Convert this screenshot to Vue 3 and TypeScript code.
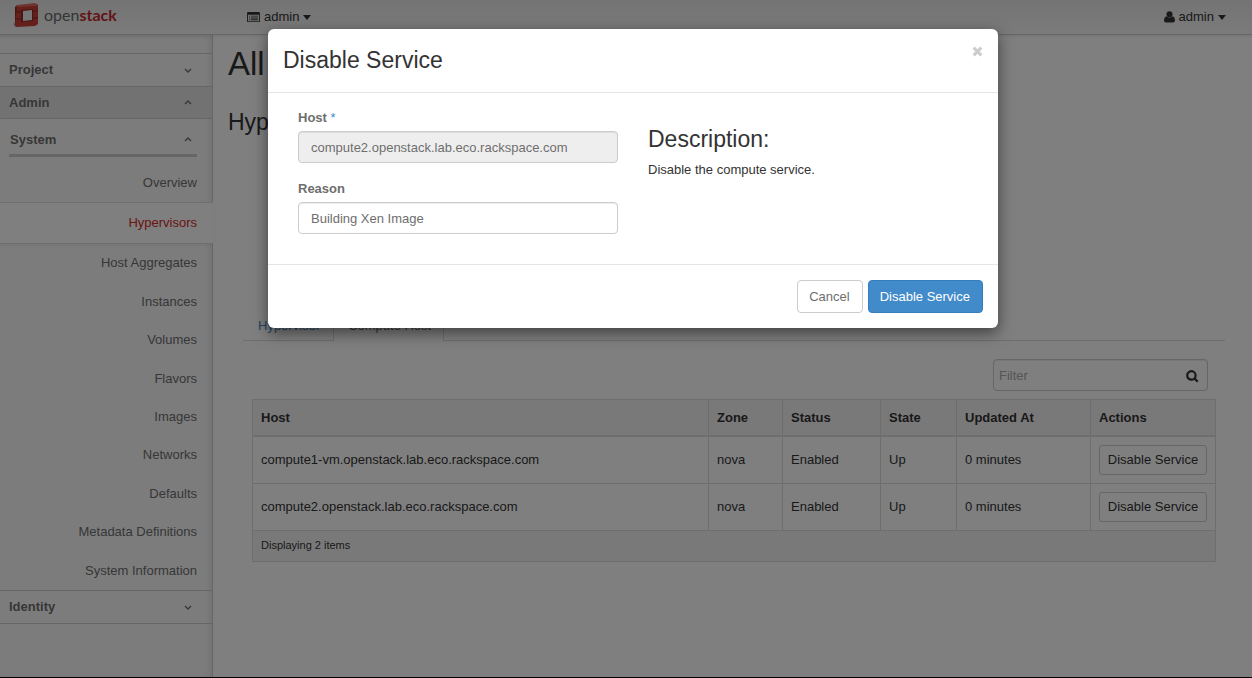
<script setup lang="ts">
import { ref } from 'vue'

interface HostRow {
  host: string
  zone: string
  status: string
  state: string
  updated: string
}

const systemLinks: string[] = [
  'Host Aggregates',
  'Instances',
  'Volumes',
  'Flavors',
  'Images',
  'Networks',
  'Defaults',
  'Metadata Definitions',
  'System Information',
]

const rows: HostRow[] = [
  { host: 'compute1-vm.openstack.lab.eco.rackspace.com', zone: 'nova', status: 'Enabled', state: 'Up', updated: '0 minutes' },
  { host: 'compute2.openstack.lab.eco.rackspace.com', zone: 'nova', status: 'Enabled', state: 'Up', updated: '0 minutes' },
]

const host = ref('compute2.openstack.lab.eco.rackspace.com')
const reason = ref('Building Xen Image')
const filter = ref('')
</script>

<template>
  <div class="page">
    <header class="topbar">
      <a class="brand" href="#">
        <svg class="cube" viewBox="0 0 26 25" aria-hidden="true">
          <path d="M0 21 L4 17 L4 24 L2 24 Z" fill="#b4b4b4" />
          <path d="M4 2 L2 4 L2 22 L4 24 Z" fill="#8e2a25" />
          <path d="M4 3 L23 1 L25 2 L25 21 L22 23 L4 24 L2 22 Z" fill="#cc4037" />
          <path d="M4 2 L22 0 L25 2 L23 3 L3 4 Z" fill="#dc6a62" />
          <path d="M8 7 L20 6 L20 18 L8 19 Z" fill="#8e2a25" />
          <path d="M10 8 L19 7 L19 17 L10 18 Z" fill="#ececec" />
          <path d="M3 9 L8 9 M3 16 L8 16 M20 8 L25 8 M20 15 L25 15" stroke="#8e2a25" stroke-width="1" />
        </svg>
        <span class="word">open<b>stack</b></span>
      </a>
      <button class="menu" type="button">
        <svg class="list-icon" viewBox="0 0 14 12" aria-hidden="true">
          <path fill="#333" fill-rule="evenodd" d="M1 0H13Q14 0 14 1V10Q14 11 13 11H1Q0 11 0 10V1Q0 0 1 0Z M1 3V10H13V3Z" />
          <path fill="#333" d="M2 4h1v1H2z M4 4h8v1H4z M2 6h1v1H2z M4 6h8v1H4z M2 8h1v1H2z M4 8h8v1H4z" />
        </svg>
        admin
        <i class="caret"></i>
      </button>
      <button class="menu user" type="button">
        <svg class="user-icon" viewBox="0 0 11 12" aria-hidden="true">
          <circle cx="5.5" cy="3.2" r="3" fill="#333" />
          <path fill="#333" d="M2.6 5.2Q5.5 8 8.4 5.2Q11 6 11 9.6Q11 11.4 9.2 11.4H1.8Q0 11.4 0 9.6Q0 6 2.6 5.2Z" />
        </svg>
        admin
        <i class="caret"></i>
      </button>
    </header>

    <div class="columns">
      <nav class="sidebar">
        <button class="section" type="button">
          Project
          <svg class="chevron" viewBox="0 0 8 5" aria-hidden="true"><path d="M1 1L4 4L7 1" /></svg>
        </button>
        <button class="section open" type="button">
          Admin
          <svg class="chevron" viewBox="0 0 8 5" aria-hidden="true"><path d="M1 4L4 1L7 4" /></svg>
        </button>
        <button class="group" type="button">
          System
          <svg class="chevron" viewBox="0 0 8 5" aria-hidden="true"><path d="M1 4L4 1L7 4" /></svg>
        </button>
        <a class="link" href="#">Overview</a>
        <a class="link current" href="#">Hypervisors</a>
        <ul class="links">
          <li v-for="name in systemLinks" :key="name"><a href="#">{{ name }}</a></li>
        </ul>
        <button class="section last" type="button">
          Identity
          <svg class="chevron" viewBox="0 0 8 5" aria-hidden="true"><path d="M1 1L4 4L7 1" /></svg>
        </button>
      </nav>

      <main class="main">
        <h1>All Hypervisors</h1>
        <h2>Hypervisor Summary</h2>
        <div class="panel">
          <ul class="tabs">
            <li><a href="#">Hypervisor</a></li>
            <li class="active"><a href="#">Compute Host</a></li>
          </ul>
          <div class="table-area">
            <div class="filter">
              <input v-model="filter" type="text" placeholder="Filter" aria-label="Filter" />
              <button type="button" aria-label="Search">
                <svg viewBox="0 0 13 13" aria-hidden="true">
                  <circle cx="5.4" cy="5.4" r="4.2" /><path d="M8.6 8.6L11.8 11.8" />
                </svg>
              </button>
            </div>
            <table>
              <colgroup>
                <col /><col class="c-zone" /><col class="c-status" /><col class="c-state" /><col class="c-updated" /><col class="c-actions" />
              </colgroup>
              <thead>
                <tr><th>Host</th><th>Zone</th><th>Status</th><th>State</th><th>Updated At</th><th>Actions</th></tr>
              </thead>
              <tbody>
                <tr v-for="row in rows" :key="row.host">
                  <td>{{ row.host }}</td>
                  <td>{{ row.zone }}</td>
                  <td>{{ row.status }}</td>
                  <td>{{ row.state }}</td>
                  <td>{{ row.updated }}</td>
                  <td><button class="row-action" type="button">Disable Service</button></td>
                </tr>
              </tbody>
              <tfoot>
                <tr><td colspan="6">Displaying 2 items</td></tr>
              </tfoot>
            </table>
          </div>
        </div>
      </main>
    </div>

    <div class="overlay">
      <form class="modal" role="dialog" aria-labelledby="modal-title" @submit.prevent>
        <div class="modal-head">
          <h3 id="modal-title">Disable Service</h3>
          <button class="close" type="button" aria-label="Close">
            <svg viewBox="0 0 10 10" aria-hidden="true"><path d="M1.5 1.5L8.5 8.5M8.5 1.5L1.5 8.5" /></svg>
          </button>
        </div>
        <div class="modal-body">
          <div class="col">
            <div class="field">
              <label for="host">Host <span class="required">*</span></label>
              <input id="host" v-model="host" type="text" readonly />
            </div>
            <div class="field">
              <label for="reason">Reason</label>
              <input id="reason" v-model="reason" type="text" />
            </div>
          </div>
          <div class="col description">
            <h3>Description:</h3>
            <p>Disable the compute service.</p>
          </div>
        </div>
        <div class="modal-foot">
          <button class="btn" type="button">Cancel</button>
          <button class="btn primary" type="submit">Disable Service</button>
        </div>
      </form>
    </div>
  </div>
</template>

<style>
body {
  margin: 0;
}
</style>

<style scoped>
* {
  box-sizing: border-box;
}

.page {
  position: relative;
  display: flex;
  flex-direction: column;
  min-height: 100vh;
  background: #fff;
  color: #333;
  font: 13px/18px "Liberation Sans", Arial, sans-serif;
}

button,
input {
  font: inherit;
}

button {
  cursor: pointer;
}

a {
  text-decoration: none;
}

h1,
h2,
h3,
p,
ul {
  margin: 0;
  padding: 0;
  font-weight: normal;
}

ul {
  list-style: none;
}

.topbar {
  z-index: 1;
  display: flex;
  align-items: center;
  height: 35px;
  padding-right: 26px;
  border-bottom: 1px solid #ccc;
  background: linear-gradient(#e8e8e8, #f6f6f6);
  box-shadow: 0 1px 4px rgba(0, 0, 0, 0.1);
}

.brand {
  display: flex;
  align-items: center;
  gap: 5px;
  width: 247px;
  height: 30px;
  margin-bottom: 4px;
  padding-left: 13px;
}

.cube {
  width: 26px;
  height: 25px;
}

.word {
  color: #6a6a6a;
  font: 16px/24px Lato, "Liberation Sans", sans-serif;
}

.word b {
  color: #c42a2c;
}

.menu {
  display: flex;
  align-items: center;
  gap: 4px;
  padding: 0;
  border: 0;
  background: none;
  color: #333;
}

.user {
  margin-left: auto;
}

.list-icon {
  width: 13px;
  height: 11px;
}

.user-icon {
  width: 11px;
  height: 12px;
}

.caret {
  border: 4px solid transparent;
  border-top: 5px solid #333;
  border-bottom: 0;
}

.columns {
  display: flex;
  flex: 1;
}

.sidebar {
  flex: none;
  width: 213px;
  padding-top: 18px;
  border-right: 1px solid #ccc;
  background: #f9f9f9;
  box-shadow: inset -3px 0 6px rgba(0, 0, 0, 0.08);
}

.section,
.group {
  display: flex;
  align-items: center;
  justify-content: space-between;
  width: 100%;
  border: 0;
  background: none;
  color: #6e6e6e;
  font-weight: bold;
}

.section {
  height: 33px;
  padding: 0 20px 0 9px;
  border-top: 1px solid #ccc;
}

.section.open {
  border-bottom: 1px solid #ccc;
  background: #e5e5e5;
}

.section.last {
  height: 34px;
  border-bottom: 1px solid #ccc;
}

.group {
  width: 188px;
  height: 38px;
  margin-left: 9px;
  padding: 6px 5px 0 1px;
  border-bottom: 3px solid #ccc;
}

.chevron {
  width: 8px;
  height: 5px;
  fill: none;
  stroke: #6e6e6e;
  stroke-width: 1.4;
}

.link,
.links a {
  color: #6e6e6e;
  text-align: right;
}

.link {
  display: block;
  padding: 17px 15px 10px;
}

.link.current {
  width: 213px;
  padding: 11px 16px;
  border-top: 1px solid #dcdcdc;
  border-bottom: 1px solid #dcdcdc;
  background: #fff;
  box-shadow: 0 2px 3px rgba(0, 0, 0, 0.05);
  color: #d42a27;
}

.links {
  display: flex;
  flex-direction: column;
  min-height: 346px;
  padding-right: 15px;
}

.links li {
  display: flex;
  flex: 1;
  align-items: center;
  justify-content: flex-end;
}

.main {
  flex: 1;
  min-width: 0;
  padding: 9px 27px 0 15px;
}

h1 {
  font-size: 33px;
  line-height: 40px;
}

h2,
h3 {
  font-size: 23px;
  line-height: 25px;
}

h2 {
  margin-top: 26px;
}

.panel {
  margin: 167px 0 0 15px;
}

.tabs {
  display: flex;
  border-bottom: 1px solid #ddd;
}

.tabs li {
  margin-bottom: -1px;
}

.tabs a {
  display: block;
  padding: 14px 12px 6px 14px;
  border: 1px solid transparent;
  border-bottom: 0;
  border-radius: 4px 4px 0 0;
  color: #428bca;
}

.tabs .active a {
  border-color: #ddd;
  background: #fff;
  color: #6e6e6e;
}

.table-area {
  padding: 18px 9px 0;
}

.filter {
  display: flex;
  width: 215px;
  height: 32px;
  margin: 0 8px 8px auto;
  border: 1px solid #ccc;
  border-radius: 4px;
  box-shadow: inset 0 1px 1px rgba(0, 0, 0, 0.075);
}

.filter input {
  flex: 1;
  min-width: 0;
  padding: 2px 5px 0;
  border: 0;
  background: none;
  color: #555;
}

.filter input::placeholder {
  color: #aaa;
  opacity: 1;
}

.filter button {
  display: flex;
  align-items: center;
  padding: 2px 8px 0;
  border: 0;
  background: none;
}

.filter svg {
  width: 13px;
  height: 13px;
  fill: none;
  stroke: #333;
  stroke-width: 2.2;
}

table {
  width: 100%;
  border: 1px solid #ddd;
  border-spacing: 0;
  table-layout: fixed;
}

.c-zone { width: 74px; }
.c-status { width: 98px; }
.c-state { width: 76px; }
.c-updated { width: 134px; }
.c-actions { width: 125px; }

th,
td {
  padding: 8px;
  border-left: 1px solid #ddd;
  text-align: left;
}

th:first-child,
td:first-child {
  border-left: 0;
}

th {
  height: 37px;
  border-bottom: 2px solid #ddd;
  background: #f3f3f3;
}

td {
  height: 47px;
  border-bottom: 1px solid #ddd;
}

tfoot td {
  height: 30px;
  padding: 0 8px 2px;
  border-bottom: 0;
  background: #f3f3f3;
  font-size: 11px;
}

.row-action {
  display: block;
  width: 108px;
  height: 30px;
  padding: 0;
  border: 1px solid #ccc;
  border-radius: 3px;
  background: #fff;
  color: #333;
}

.overlay {
  position: absolute;
  z-index: 2;
  inset: 0;
  padding: 29px 0 0 14px;
  border-bottom: 1px solid #000;
  background: rgba(0, 0, 0, 0.5);
}

.modal {
  width: 100%;
  max-width: 730px;
  margin: 0 auto;
  border-radius: 6px;
  background: #fff;
  box-shadow: 0 5px 15px rgba(0, 0, 0, 0.5);
}

.modal-head {
  display: flex;
  justify-content: space-between;
  align-items: flex-start;
  padding: 15px;
  border-bottom: 1px solid #e5e5e5;
}

.modal-head h3 {
  line-height: 33px;
}

.close {
  display: flex;
  padding: 2px 0;
  border: 0;
  background: none;
}

.close svg {
  width: 11px;
  height: 11px;
  fill: none;
  stroke: #ccc;
  stroke-width: 2.8;
}

.modal-body {
  display: flex;
  padding: 16px 15px 30px;
}

.col {
  flex: 1;
  padding: 0 15px;
}

.field + .field {
  margin-top: 17px;
}

.field label {
  display: block;
  margin-bottom: 4px;
  color: #6e6e6e;
  font-weight: bold;
}

.required {
  color: #428bca;
  font-weight: normal;
}

.field input {
  display: block;
  width: 100%;
  height: 32px;
  padding: 0 12px;
  border: 1px solid #ccc;
  border-radius: 4px;
  background: #fff;
  box-shadow: inset 0 1px 1px rgba(0, 0, 0, 0.075);
  color: #6e6e6e;
}

.field input[readonly] {
  background: #eee;
}

.description {
  padding-top: 18px;
}

.description p {
  margin-top: 9px;
}

.modal-foot {
  display: flex;
  justify-content: flex-end;
  gap: 5px;
  padding: 15px;
  border-top: 1px solid #e5e5e5;
}

.btn {
  height: 33px;
  padding: 0 12px 0 11px;
  border: 1px solid #ccc;
  border-radius: 4px;
  background: #fff;
  color: #6e6e6e;
}

.btn.primary {
  border-color: #357ebd;
  background: #428bca;
  color: #fff;
}
</style>
